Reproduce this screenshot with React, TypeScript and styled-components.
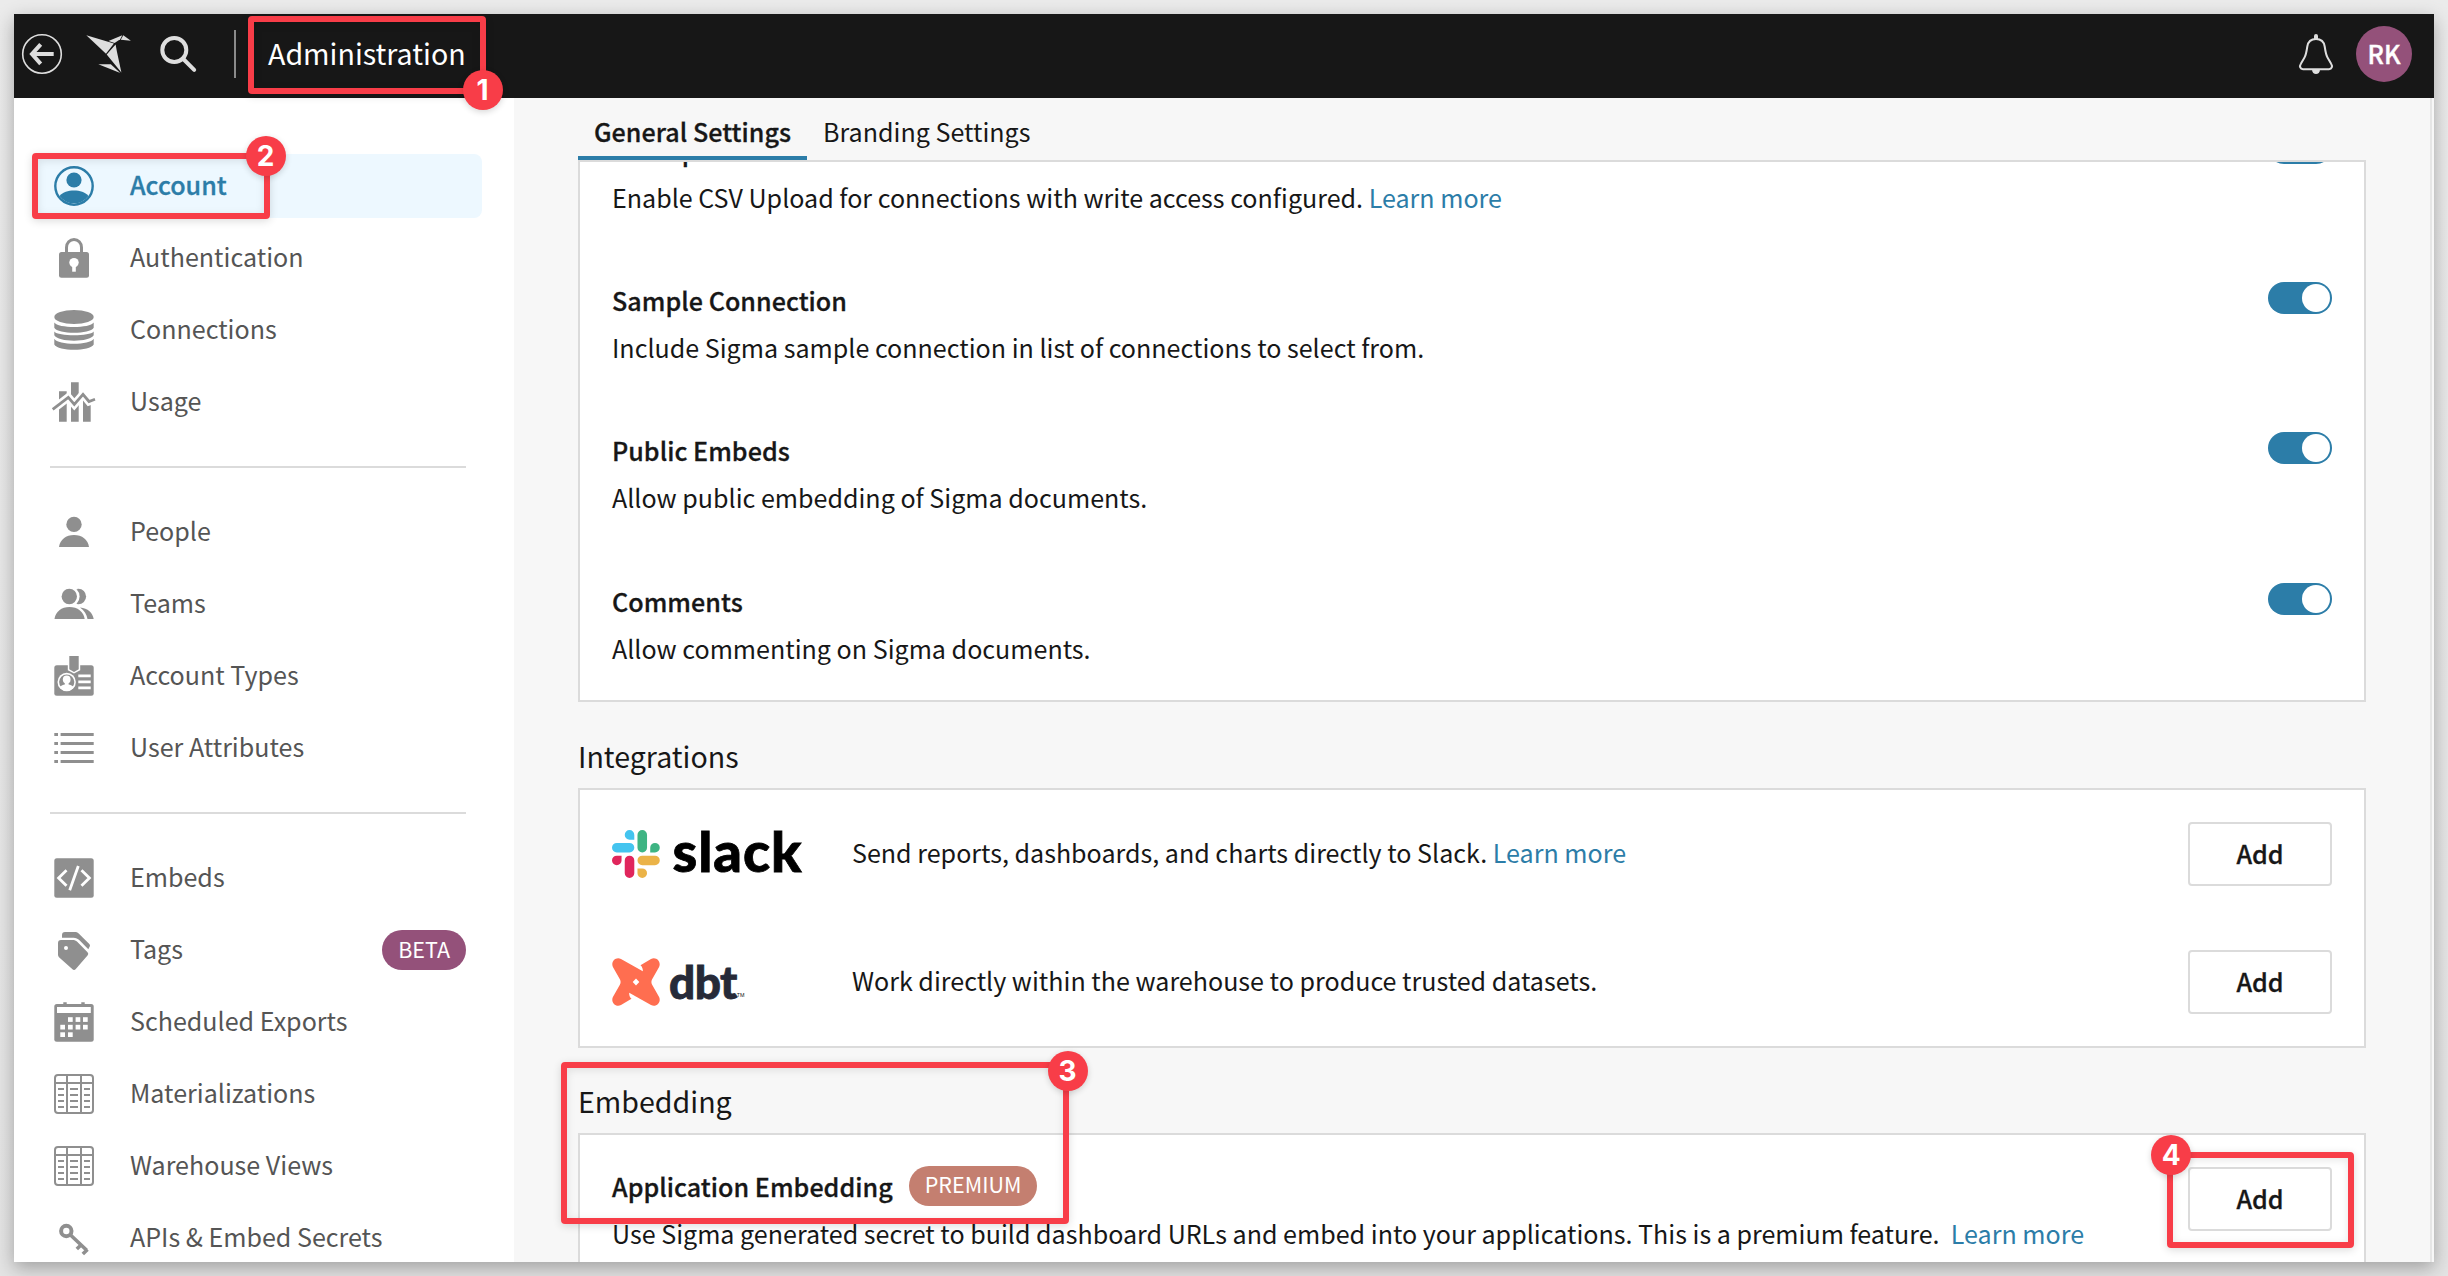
import React from "react";
import styled, { createGlobalStyle } from "styled-components";

const GlobalStyle = createGlobalStyle`
  *, *::before, *::after { box-sizing: border-box; }
  body {
    margin: 0;
    background: #e8e8e8;
    font-family: "Noto Sans CJK SC", "Noto Sans", sans-serif;
    font-size: 25.07px;
    color: #171717;
  }
`;

const Page = styled.div`
  position: relative;
  height: 1276px;
  padding: 14px;
  overflow: hidden;
  background: linear-gradient(#ebebeb, #e4e4e4);
`;

const Window = styled.div`
  height: 1248px;
  display: flex;
  flex-direction: column;
  background: #f7f7f7;
  box-shadow: 0 6px 18px rgba(0, 0, 0, 0.3);
`;

const Header = styled.header`
  flex: none;
  display: flex;
  align-items: center;
  height: 84px;
  padding: 0 22px 4px 8px;
  background: #171717;
  color: #fff;
`;

const Divider = styled.div`
  width: 2px;
  height: 48px;
  margin: 0 32px 0 36px;
  background: #8a8a8a;
`;

const Title = styled.h1`
  margin: 0;
  padding-bottom: 2px;
  flex: 1;
  font-size: 28.6px;
  line-height: 40px;
  font-weight: 400;
`;

const HeaderIcon = styled.svg<{ $gap?: number }>`
  flex: none;
  margin-right: ${(p) => p.$gap ?? 0}px;
  overflow: visible;
`;

const Avatar = styled.div`
  display: flex;
  align-items: center;
  justify-content: center;
  width: 56px;
  height: 56px;
  padding-bottom: 3px;
  border-radius: 50%;
  background: #94517a;
  font-size: 25px;
  font-weight: 500;
  -webkit-text-stroke: 0.4px;
`;

const Body = styled.div`
  flex: 1;
  min-height: 0;
  display: flex;
`;

const Sidebar = styled.nav`
  flex: none;
  width: 500px;
  padding: 56px 32px 0 20px;
  background: #fff;
  overflow: hidden;
`;

const NavGroup = styled.ul`
  display: flex;
  flex-direction: column;
  gap: 8px;
  margin: 0;
  padding: 0;
  list-style: none;

  & + & {
    margin-top: 32px;
  }
  & + &::before {
    content: "";
    height: 2px;
    margin: 0 16px 24px;
    background: #dbdbdb;
  }
`;

const NavItem = styled.li<{ $active?: boolean }>`
  display: flex;
  align-items: center;
  height: 64px;
  padding: 0 16px 0 20px;
  border-radius: 8px;
  background: ${(p) => (p.$active ? "#edf8ff" : "transparent")};
  color: ${(p) => (p.$active ? "#2c7da8" : "#555")};
  font-weight: ${(p) => (p.$active ? 500 : 400)};
  -webkit-text-stroke: ${(p) => (p.$active ? 0.3 : 0)}px;
`;

const NavIcon = styled.svg<{ $active?: boolean }>`
  flex: none;
  width: 40px;
  height: 40px;
  margin-right: 36px;
  overflow: visible;
  color: ${(p) => (p.$active ? "#2c7da8" : "#8f8f8f")};
`;

const NavLabel = styled.span`
  flex: 1;
  padding-bottom: 4px;
  line-height: 40px;
  white-space: nowrap;
`;

const Pill = styled.span<{ $tone: string }>`
  display: inline-flex;
  align-items: center;
  height: 40px;
  padding: 0 16px 4px;
  border-radius: 20px;
  background: ${(p) => p.$tone};
  color: #fff;
  font-size: 21.5px;
  font-weight: 400;
  letter-spacing: 0;
  -webkit-text-stroke: 0;
`;

const Main = styled.main`
  flex: 1;
  min-width: 0;
  display: flex;
  flex-direction: column;
  margin-right: 2px;
  padding: 0 64px 0 64px;
  border-right: 2px solid #e6e6e6;
  overflow: hidden;
`;

const Tabs = styled.div`
  flex: none;
  display: flex;
  height: 62px;
`;

const Tab = styled.div<{ $active?: boolean }>`
  padding: 13px 16px 0;
  line-height: 40px;
  font-weight: ${(p) => (p.$active ? 500 : 400)};
  letter-spacing: ${(p) => (p.$active ? 0.04 : 0)}px;
  -webkit-text-stroke: ${(p) => (p.$active ? 0.3 : 0)}px;
  border-bottom: 4px solid ${(p) => (p.$active ? "#2c7da8" : "transparent")};
`;

const Panel = styled.section`
  flex: none;
  border: 2px solid #dbdbdb;
  background: #fff;
  overflow: hidden;
`;

const SettingList = styled.div`
  display: flex;
  flex-direction: column;
  gap: 64px;
  margin-top: -32px;
  padding: 0 32px 33.2px;
`;

const SettingRow = styled.div`
  display: flex;
  justify-content: space-between;
  align-items: flex-start;
  height: 86.2px;
`;

const SettingText = styled.div<{ $lift?: number }>`
  display: flex;
  flex-direction: column;
  gap: 7px;
  margin-top: ${(p) => -(p.$lift ?? 0)}px;
  line-height: 40px;
  white-space: nowrap;
`;

const SettingTitle = styled.div`
  display: flex;
  align-items: center;
  gap: 16px;
  font-weight: 500;
  letter-spacing: 0.04px;
  -webkit-text-stroke: 0.3px;
`;

const Link = styled.a`
  color: #2c7da8;
`;

const Toggle = styled.div`
  display: flex;
  justify-content: flex-end;
  width: 64px;
  height: 32px;
  margin-top: 2px;
  padding: 2px;
  border-radius: 16px;
  background: #2c7da8;

  &::after {
    content: "";
    width: 28px;
    height: 28px;
    border-radius: 50%;
    background: #fff;
  }
`;

const Heading = styled.h2<{ $top: number }>`
  flex: none;
  margin: ${(p) => p.$top}px 0 0;
  padding-bottom: 12px;
  font-size: 28.6px;
  line-height: 40px;
  font-weight: 400;
`;

const Integration = styled.div`
  display: flex;
  align-items: center;
  height: 128px;
  padding: 0 32px;
`;

const Brand = styled.div`
  display: flex;
  align-items: center;
  width: 240px;
`;

const Wordmark = styled.span<{ $size: number; $color: string; $x: number; $y: number; $track: number }>`
  margin-left: ${(p) => p.$x}px;
  padding-bottom: ${(p) => p.$y}px;
  font-family: Lato, sans-serif;
  font-weight: 900;
  font-size: ${(p) => p.$size}px;
  line-height: 60px;
  letter-spacing: ${(p) => p.$track}px;
  color: ${(p) => p.$color};
  -webkit-text-stroke: 0.8px;
`;

const Trademark = styled.span`
  align-self: flex-end;
  font-family: Inter, sans-serif;
  font-size: 5px;
  line-height: 14px;
  padding-bottom: 10px;
`;

const IntegrationText = styled.div`
  flex: 1;
  padding-bottom: 4px;
  line-height: 40px;
`;

const Button = styled.button`
  width: 144px;
  height: 64px;
  padding: 0 0 2px;
  border: 2px solid #dbdbdb;
  border-radius: 4px;
  background: #fff;
  color: #171717;
  font: inherit;
  font-weight: 500;
  -webkit-text-stroke: 0.3px;
`;

const EmbedRow = styled.div`
  display: flex;
  justify-content: space-between;
  align-items: flex-start;
  padding: 32px;
  height: 150px;
`;

const Callout = styled.div<{ $x: number; $y: number; $w: number; $h: number }>`
  position: absolute;
  left: ${(p) => p.$x}px;
  top: ${(p) => p.$y}px;
  width: ${(p) => p.$w}px;
  height: ${(p) => p.$h}px;
  border: 6px solid #f83d48;
  border-radius: 4px;
  box-shadow: 0 2px 8px rgba(0, 0, 0, 0.14), inset 0 2px 8px rgba(0, 0, 0, 0.1);
`;

const CalloutBadge = styled.div<{ $cx: number; $cy: number }>`
  position: absolute;
  left: ${(p) => p.$cx - 20}px;
  top: ${(p) => p.$cy - 20}px;
  display: flex;
  align-items: center;
  justify-content: center;
  width: 40px;
  height: 40px;
  border-radius: 50%;
  background: #f83d48;
  box-shadow: 0 2px 6px rgba(0, 0, 0, 0.16);
  color: #fff;
  font-family: Inter, sans-serif;
  font-weight: 700;
  font-size: 28px;
  line-height: 40px;
`;

const AccountIcon = (
  <>
    <circle cx="20" cy="20" r="18.7" fill="none" stroke="currentColor" strokeWidth="2.4" />
    <circle cx="20" cy="14" r="7.6" />
    <path d="M5.5 30C9 26.200 14 24.600 20 24.600S31 26.200 34.500 30A18 18 0 0 1 5.500 30z" />
  </>
);

const LockIcon = (
  <>
    <path d="M12.500 15V9.500a7.500 8 0 0 1 15 0V15" fill="none" stroke="currentColor" strokeWidth="3" />
    <rect x="5" y="14" width="30" height="25.700" rx="2.500" />
    <circle cx="20" cy="24.600" r="4.700" fill="#fff" />
    <rect x="18.200" y="26" width="3.600" height="7.700" fill="#fff" />
  </>
);

const DatabaseIcon = (
  <>
    <ellipse cx="20" cy="7" rx="19.700" ry="6.900" />
    <path d="M.3 12.500C4 18.500 36 18.500 39.700 12.500V17.700C36 24.400 4 24.400 .3 17.700z" />
    <path d="M.3 21.500C4 26.600 36 26.600 39.700 21.500V25.300C36 32.500 4 32.500 .3 25.300z" />
    <path d="M.3 28.700C4 35.400 36 35.400 39.700 28.700V34.500C36 41.500 4 41.500 .3 34.500z" />
  </>
);

const UsageIcon = (
  <>
    <path d="M5 9.300h7.700V39.700H5zM17 .3h7.700V39.700H17zM29 16h7.700V39.700H29z" />
    <path d="M-1.300 27.300L14.300 15.300L20.300 22.300L29 12.300L35 19.500L41 17.300" fill="none" stroke="#fff" strokeWidth="8" />
    <path d="M-1.300 27.300L14.300 15.300L20.300 22.300L29 12.300L35 19.500L41 17.300" fill="none" stroke="currentColor" strokeWidth="2.800" />
  </>
);

const PersonIcon = (
  <>
    <circle cx="20" cy="12.400" r="7.700" />
    <path d="M5 35C6 27.500 12 23 20 23s14 4.500 15 12z" />
  </>
);

const TeamIcon = (
  <>
    <circle cx="24.400" cy="12.500" r="7.700" />
    <circle cx="15.300" cy="12.500" r="10.300" fill="#fff" />
    <circle cx="15.300" cy="12.500" r="7.700" />
    <path d="M.5 35C1.500 27.500 7.500 23 15.500 23s14 4.500 15.200 12z" />
    <path d="M26 23.400C34 24.200 38.700 28.500 39.700 35H33.500C32.700 30.500 30.500 26.500 26 23.400z" />
  </>
);

const BadgeIcon = (
  <>
    <rect x=".3" y="9.300" width="39.400" height="30.400" rx="2.500" />
    <path d="M13.800 8V14.200L20 17.500L26.200 14.200V8z" fill="#fff" />
    <path d="M15.300 0H24.700V13.200L20 16L15.300 13.200z" />
    <circle cx="12.700" cy="26" r="9.200" fill="#fff" />
    <circle cx="12.700" cy="26" r="7.600" />
    <circle cx="12.700" cy="23.400" r="3.900" fill="#fff" />
    <path d="M5.800 31c1.500-1.800 3.500-2.200 5-2.600v-3h3.800v3c1.500.4 3.500.8 5 2.600a8 8 0 0 1-13.800 0z" fill="#fff" />
    <path d="M24.300 19.800H36.700M24.300 25.800H36.700M24.300 31.800H36.700" stroke="#fff" strokeWidth="2.800" />
  </>
);

const ListIcon = (
  <path d="M.3 6.500H4M6.600 6.500H39.700M.3 15.500H4M6.600 15.500H39.700M.3 24.500H4M6.600 24.500H39.700M.3 33.500H4M6.600 33.500H39.700" stroke="currentColor" strokeWidth="2.800" />
);

const CodeIcon = (
  <>
    <rect x=".3" y=".3" width="39.400" height="39.400" rx="2.500" />
    <path d="M12.500 12.300L4.600 20L12.500 27.800M27.500 12.300L35.400 20L27.500 27.800M24.300 8L15.700 32.200" fill="none" stroke="#fff" strokeWidth="2.800" />
  </>
);

const TagsIcon = (
  <>
    <path d="M4 13a3 3 0 0 1 3-3H18.500c2 0 3.500.5 4.700 1.700L33.300 22c1.200 1.200 1.200 2.300.2 3.500L21.800 39c-1 1.300-2.500 1.300-3.600 0L5 27.200c-.7-.7-1-1.500-1-2.500z" />
    <path d="M8 7.700V5c0-2 1-3 3-3H20.500c1.800 0 3 .4 4.200 1.500L35.300 14c.8.800.9 1.800.3 2.800L34.300 19.200L25.500 10.300C23.800 8.500 22 7.700 19.500 7.700z" />
    <circle cx="12" cy="18" r="2" fill="#fff" />
  </>
);

const calendarCells = [
  [14, 15.2], [21.6, 15.2], [29, 15.2],
  [6.3, 22.8], [14, 22.8], [21.6, 22.8], [29, 22.8],
  [6.3, 30.3], [14, 30.3],
];

const CalendarIcon = (
  <>
    <rect x=".3" y="2" width="39.400" height="37.700" rx="2.500" />
    <path d="M9.300 .3h3.400V3H9.300zM27.300 .3h3.400V3H27.300z" />
    <rect x="3" y="5" width="33.800" height="6" fill="#fff" />
    {calendarCells.map(([x, y]) => (
      <rect key={`${x}-${y}`} x={x} y={y} width="4.700" height="4.700" fill="#fff" />
    ))}
  </>
);

const TableIcon = (
  <>
    <rect x="1" y="1" width="38" height="38" rx="3" fill="none" stroke="currentColor" strokeWidth="2" />
    <path
      d="M1 9H39M13 1V39M27 1V39M4 15H10M4 21H10M4 27H10M4 33H10M16 15H24M16 21H24M16 27H24M16 33H24M30 15H36M30 21H36M30 27H36M30 33H36"
      stroke="currentColor"
      strokeWidth="2"
    />
  </>
);

const KeyIcon = (
  <>
    <circle cx="12.300" cy="13" r="5.200" fill="none" stroke="currentColor" strokeWidth="4" />
    <path d="M16 16.500L32.700 32.300M33.500 31.500L28.800 36M27 27L22.800 31" stroke="currentColor" strokeWidth="3.600" />
  </>
);

type Item = { label: string; icon: React.ReactNode; active?: boolean; tag?: string };

const groups: Item[][] = [
  [
    { label: "Account", icon: AccountIcon, active: true },
    { label: "Authentication", icon: LockIcon },
    { label: "Connections", icon: DatabaseIcon },
    { label: "Usage", icon: UsageIcon },
  ],
  [
    { label: "People", icon: PersonIcon },
    { label: "Teams", icon: TeamIcon },
    { label: "Account Types", icon: BadgeIcon },
    { label: "User Attributes", icon: ListIcon },
  ],
  [
    { label: "Embeds", icon: CodeIcon },
    { label: "Tags", icon: TagsIcon, tag: "BETA" },
    { label: "Scheduled Exports", icon: CalendarIcon },
    { label: "Materializations", icon: TableIcon },
    { label: "Warehouse Views", icon: TableIcon },
    { label: "APIs & Embed Secrets", icon: KeyIcon },
  ],
];

const settings = [
  { title: "CSV Upload", text: "Enable CSV Upload for connections with write access configured.", link: true },
  { title: "Sample Connection", text: "Include Sigma sample connection in list of connections to select from." },
  { title: "Public Embeds", text: "Allow public embedding of Sigma documents." },
  { title: "Comments", text: "Allow commenting on Sigma documents." },
];

const SlackMark = () => (
  <svg width="48" height="48" viewBox="0 0 54 54">
    <path fill="#44c4ef" d="M19.712.133a5.381 5.381 0 0 0-5.376 5.387 5.381 5.381 0 0 0 5.376 5.386h5.376V5.52A5.381 5.381 0 0 0 19.712.133m0 14.365H5.376A5.381 5.381 0 0 0 0 19.884a5.381 5.381 0 0 0 5.376 5.387h14.336a5.381 5.381 0 0 0 5.376-5.387 5.381 5.381 0 0 0-5.376-5.386" />
    <path fill="#3eb483" d="M53.76 19.884a5.381 5.381 0 0 0-5.376-5.386 5.381 5.381 0 0 0-5.376 5.386v5.387h5.376a5.381 5.381 0 0 0 5.376-5.387m-14.336 0V5.52A5.381 5.381 0 0 0 34.048.133a5.381 5.381 0 0 0-5.376 5.387v14.364a5.381 5.381 0 0 0 5.376 5.387 5.381 5.381 0 0 0 5.376-5.387" />
    <path fill="#ebb348" d="M34.048 54a5.381 5.381 0 0 0 5.376-5.387 5.381 5.381 0 0 0-5.376-5.386h-5.376v5.386A5.381 5.381 0 0 0 34.048 54m0-14.365h14.336a5.381 5.381 0 0 0 5.376-5.386 5.381 5.381 0 0 0-5.376-5.387H34.048a5.381 5.381 0 0 0-5.376 5.387 5.381 5.381 0 0 0 5.376 5.386" />
    <path fill="#e0265c" d="M0 34.249a5.381 5.381 0 0 0 5.376 5.386 5.381 5.381 0 0 0 5.376-5.386v-5.387H5.376A5.381 5.381 0 0 0 0 34.25m14.336-.001v14.364A5.381 5.381 0 0 0 19.712 54a5.381 5.381 0 0 0 5.376-5.387V34.25a5.381 5.381 0 0 0-5.376-5.387 5.381 5.381 0 0 0-5.376 5.387" />
  </svg>
);

const DbtMark = () => (
  <svg width="48" height="48" viewBox="0 0 48 48">
    <path
      fill="#ff6e50"
      fillRule="evenodd"
      d="M.9 9C-1.500 4 3.500-1.800 9 .9L30.800 13.300C31 11 30.200 8.800 28.500 7.300L39 .9C44.500-1.800 49.500 4 47.100 9L40 21.500C39.200 23.200 39.200 24.800 40 26.500L47.100 39C49.500 44 44.500 49.800 39 47.100L17.200 34.700C17 37 17.800 39.200 19.500 40.700L9 47.100C3.500 49.800-1.500 44 .9 39L8 26.500C8.800 24.800 8.800 23.200 8 21.500zM24 20.600L20.700 24L24 27.400L27.300 24z"
    />
  </svg>
);

export default function App() {
  return (
    <>
      <GlobalStyle />
      <Page>
        <Window>
          <Header>
            <HeaderIcon width="40" height="40" $gap={22} fill="none" stroke="#dedede">
              <circle cx="20" cy="20" r="19.300" strokeWidth="1.600" />
              <path d="M18.700 10.300L10 20L18.700 29.800M10 20H31.700" strokeWidth="4" />
            </HeaderIcon>
            <HeaderIcon width="48" height="42" $gap={28} fill="#dedede">
              <path d="M2.300 2.300L29.900 10.600L22 20.700z" />
              <path d="M24.500 7.900L38.300 2.300L36.200 6.300L30.600 10z" />
              <path d="M39.300 2.300L46.900 7.800L36.800 6.700z" />
              <path d="M31.600 11.500L33 19L37.400 39.500L22.700 21.500z" />
              <path d="M14.300 31.300L26.800 31.300L36.300 40z" />
            </HeaderIcon>
            <HeaderIcon width="38" height="38" fill="none" stroke="#dedede">
              <circle cx="14.300" cy="15" r="12" strokeWidth="4" />
              <path d="M22.800 23.500L34.200 34.800" strokeWidth="4" strokeLinecap="round" />
            </HeaderIcon>
            <Divider />
            <Title>Administration</Title>
            <HeaderIcon width="40" height="40" $gap={20} fill="none" stroke="#dedede">
              <path
                strokeWidth="2"
                d="M20 5c-5 0-8 3-8.700 7.500C10.500 18 10 21 8.500 23.500L5 29.500C3 32.500 4.300 35.200 7 35.200h26c2.700 0 4-2.700 2-5.700l-3.500-6c-1.500-2.500-2-5.500-2.800-11C28 8 25 5 20 5z"
              />
              <path stroke="none" fill="#dedede" d="M18 5V2a2 2 0 0 1 4 0V5zM16 35.500h8c0 6-8 6-8 0z" />
            </HeaderIcon>
            <Avatar>RK</Avatar>
          </Header>
          <Body>
            <Sidebar>
              {groups.map((group) => (
                <NavGroup key={group[0].label}>
                  {group.map((item) => (
                    <NavItem key={item.label} $active={item.active}>
                      <NavIcon viewBox="0 0 40 40" fill="currentColor" $active={item.active}>
                        {item.icon}
                      </NavIcon>
                      <NavLabel>{item.label}</NavLabel>
                      {item.tag && <Pill $tone="#94517a">{item.tag}</Pill>}
                    </NavItem>
                  ))}
                </NavGroup>
              ))}
            </Sidebar>
            <Main>
              <Tabs>
                <Tab $active>General Settings</Tab>
                <Tab>Branding Settings</Tab>
              </Tabs>
              <Panel>
                <SettingList>
                  {settings.map((s) => (
                    <SettingRow key={s.title}>
                      <SettingText>
                        <SettingTitle>{s.title}</SettingTitle>
                        <div>
                          {s.text} {s.link && <Link>Learn more</Link>}
                        </div>
                      </SettingText>
                      <Toggle />
                    </SettingRow>
                  ))}
                </SettingList>
              </Panel>
              <Heading $top={34}>Integrations</Heading>
              <Panel>
                <Integration>
                  <Brand>
                    <SlackMark />
                    <Wordmark $size={56} $color="#000" $x={12.5} $y={6} $track={0.9}>slack</Wordmark>
                  </Brand>
                  <IntegrationText>
                    Send reports, dashboards, and charts directly to Slack. <Link>Learn more</Link>
                  </IntegrationText>
                  <Button>Add</Button>
                </Integration>
                <Integration>
                  <Brand>
                    <DbtMark />
                    <Wordmark $size={46} $color="#262a38" $x={9} $y={0} $track={-0.6}>dbt</Wordmark>
                    <Trademark>TM</Trademark>
                  </Brand>
                  <IntegrationText>Work directly within the warehouse to produce trusted datasets.</IntegrationText>
                  <Button>Add</Button>
                </Integration>
              </Panel>
              <Heading $top={33}>Embedding</Heading>
              <Panel>
                <EmbedRow>
                  <SettingText $lift={1}>
                    <SettingTitle>
                      Application Embedding <Pill $tone="#c47f70">PREMIUM</Pill>
                    </SettingTitle>
                    <div>
                      Use Sigma generated secret to build dashboard URLs and embed into your applications. This is a premium feature.{" "}
                      &nbsp;<Link>Learn more</Link>
                    </div>
                  </SettingText>
                  <Button>Add</Button>
                </EmbedRow>
              </Panel>
            </Main>
          </Body>
        </Window>
        <Callout $x={248} $y={16} $w={238} $h={78} />
        <CalloutBadge $cx={482.5} $cy={90}>1</CalloutBadge>
        <Callout $x={32} $y={153} $w={238} $h={66} />
        <CalloutBadge $cx={265.5} $cy={156}>2</CalloutBadge>
        <Callout $x={561} $y={1062} $w={508} $h={162} />
        <CalloutBadge $cx={1067.5} $cy={1071}>3</CalloutBadge>
        <Callout $x={2167} $y={1152} $w={187} $h={96} />
        <CalloutBadge $cx={2171.3} $cy={1155.3}>4</CalloutBadge>
      </Page>
    </>
  );
}
